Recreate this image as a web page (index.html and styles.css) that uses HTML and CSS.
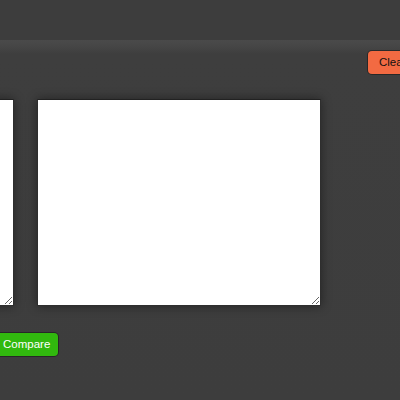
FILE: index.html
```html
<!DOCTYPE html>
<html>
<head>
<meta charset="utf-8">
<link rel="stylesheet" href="styles.css">
</head>
<body>
<div class="header"></div>
<div class="toolbar">
  <div class="toolbar-actions">
    <button class="btn btn-clear">Clear</button>
  </div>
  <div class="editors">
    <textarea class="editor"></textarea>
    <textarea class="editor"></textarea>
  </div>
  <div class="actions">
    <button class="btn btn-compare">Compare</button>
  </div>
</div>
</body>
</html>
```
FILE: styles.css
```css
html, body {
  margin: 0;
  padding: 0;
  width: 400px;
  height: 400px;
  overflow: hidden;
  background: #3d3d3d;
  font-family: "Liberation Sans", Arial, sans-serif;
}
.header {
  height: 40px;
  background: #3d3d3d;
}
.toolbar {
  background: linear-gradient(to bottom, #4a4a4a 0px, #464646 6px, #3e3e3e 14px, #3d3d3d 100%);
  height: 360px;
  padding-top: 11px;
  box-sizing: border-box;
}
.toolbar-actions {
  display: flex;
  padding-left: 368px;
  width: 600px;
}
.btn {
  font-family: "Liberation Sans", Arial, sans-serif;
  font-size: 11.5px;
  height: 23px;
  border: none;
  border-radius: 4px;
  padding: 0 11px;
  box-shadow: 0 0 0 1px rgba(0,0,0,0.35);
  line-height: 23px;
  flex: none;
}
.btn-clear {
  background: #f26a42;
  color: #111;
}
.editors {
  display: flex;
  gap: 23px;
  margin-top: 25px;
  margin-left: -270px;
  width: 900px;
}
.editor {
  width: 284px;
  height: 207px;
  box-sizing: border-box;
  background: #fff;
  border: 1px solid #2e2e2e;
  border-top-color: #222;
  box-shadow: 0 0 10px rgba(0,0,0,0.45);
  margin: 0;
  flex: none;
}
.actions {
  display: flex;
  margin-top: 27px;
  margin-left: -7px;
}
.btn-compare {
  background: #31b90e;
  color: #fff;
  width: 65px;
  padding: 0 0 0 10px;
  text-align: left;
}
```
